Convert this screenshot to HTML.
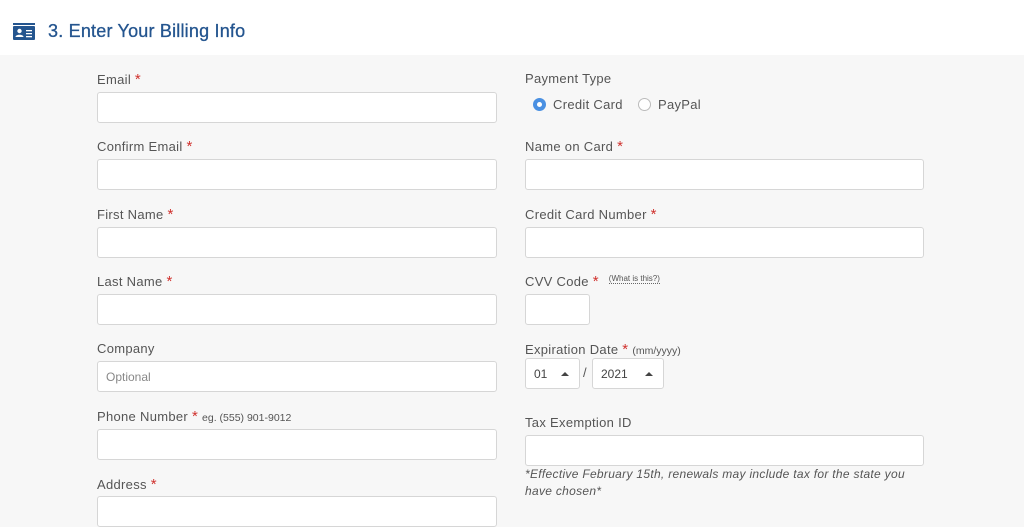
<!DOCTYPE html>
<html><head><style>
*{box-sizing:border-box;margin:0;padding:0}
body{width:1024px;height:510px;overflow:hidden;background:#f7f7f7;font-family:"Liberation Sans",sans-serif;color:#555;position:relative}
.hdr{position:absolute;left:0;top:0;width:1024px;height:55px;background:#fff}
.hdr h1{position:absolute;left:48px;top:21px;font-size:18px;font-weight:normal;color:#24558f;letter-spacing:0.2px;-webkit-text-stroke:0.3px #24558f}
.lbl{position:absolute;font-size:13px;color:#555;letter-spacing:0.3px}
.lbl b{color:#d0312d;font-weight:normal;font-size:15px}
.sm{font-size:10.5px;color:#555;letter-spacing:0}
.in{position:absolute;height:31px;background:#fff;border:1px solid #d6d6d6;border-radius:3px;font-size:12px;color:#888;padding:8px 8px}
.sel{position:absolute;height:31px;background:#fff;border:1px solid #d6d6d6;border-radius:3px;font-size:12px;color:#444;padding:8px 8px}
.sel:after{content:"";position:absolute;right:10px;top:13px;border:4px solid transparent;border-bottom:4px solid #444;border-top:0}
.rad{position:absolute;width:13px;height:13px;border-radius:50%;border:1px solid #bbb;background:#fff}
.note{position:absolute;left:525px;top:466px;font-size:12px;font-style:italic;color:#555;line-height:17px;width:395px;letter-spacing:0.3px}
</style></head><body>
<div class="hdr">
<svg style="position:absolute;left:13px;top:23px" width="22" height="17" viewBox="0 0 22 17"><rect x="0" y="0" width="22" height="2" fill="#24558f"/><rect x="0" y="3" width="22" height="14" rx="1" fill="#24558f"/><circle cx="6.5" cy="8" r="2.2" fill="#fff"/><path d="M2.5 14c0-3 8-3 8 0z" fill="#fff"/><rect x="13" y="7" width="6" height="1.3" fill="#fff"/><rect x="13" y="10" width="6" height="1.3" fill="#fff"/><rect x="13" y="13" width="6" height="1.3" fill="#fff"/></svg>
<h1>3. Enter Your Billing Info</h1>
</div>
<div class="lbl" style="left:97px;top:71px">Email <b>*</b></div>
<div class="in" style="left:97px;top:92px;width:400px"></div>
<div class="lbl" style="left:97px;top:138px">Confirm Email <b>*</b></div>
<div class="in" style="left:97px;top:159px;width:400px"></div>
<div class="lbl" style="left:97px;top:206px">First Name <b>*</b></div>
<div class="in" style="left:97px;top:227px;width:400px"></div>
<div class="lbl" style="left:97px;top:273px">Last Name <b>*</b></div>
<div class="in" style="left:97px;top:294px;width:400px"></div>
<div class="lbl" style="left:97px;top:341px">Company</div>
<div class="in" style="left:97px;top:361px;width:400px">Optional</div>
<div class="lbl" style="left:97px;top:408px">Phone Number <b>*</b> <span class="sm">eg. (555) 901-9012</span></div>
<div class="in" style="left:97px;top:429px;width:400px"></div>
<div class="lbl" style="left:97px;top:476px">Address <b>*</b></div>
<div class="in" style="left:97px;top:496px;width:400px"></div>

<div class="lbl" style="left:525px;top:71px">Payment Type</div>
<div class="rad" style="left:533px;top:98px;border:4px solid #4a90e2"></div>
<div class="lbl" style="left:553px;top:97px">Credit Card</div>
<div class="rad" style="left:638px;top:98px"></div>
<div class="lbl" style="left:658px;top:97px">PayPal</div>
<div class="lbl" style="left:525px;top:138px">Name on Card <b>*</b></div>
<div class="in" style="left:525px;top:159px;width:399px"></div>
<div class="lbl" style="left:525px;top:206px">Credit Card Number <b>*</b></div>
<div class="in" style="left:525px;top:227px;width:399px"></div>
<div class="lbl" style="left:525px;top:273px">CVV Code <b>*</b> <span style="font-size:8px;margin-left:6px;border-bottom:1px dotted #666;vertical-align:5px;letter-spacing:0">(What is this?)</span></div>
<div class="in" style="left:525px;top:294px;width:65px"></div>
<div class="lbl" style="left:525px;top:341px">Expiration Date <b>*</b> <span class="sm">(mm/yyyy)</span></div>
<div class="sel" style="left:525px;top:358px;width:55px">01</div>
<div class="lbl" style="left:583px;top:365px">/</div>
<div class="sel" style="left:592px;top:358px;width:72px">2021</div>
<div class="lbl" style="left:525px;top:415px">Tax Exemption ID</div>
<div class="in" style="left:525px;top:435px;width:399px"></div>
<div class="note">*Effective February 15th, renewals may include tax for the state you have chosen*</div>
</body></html>
